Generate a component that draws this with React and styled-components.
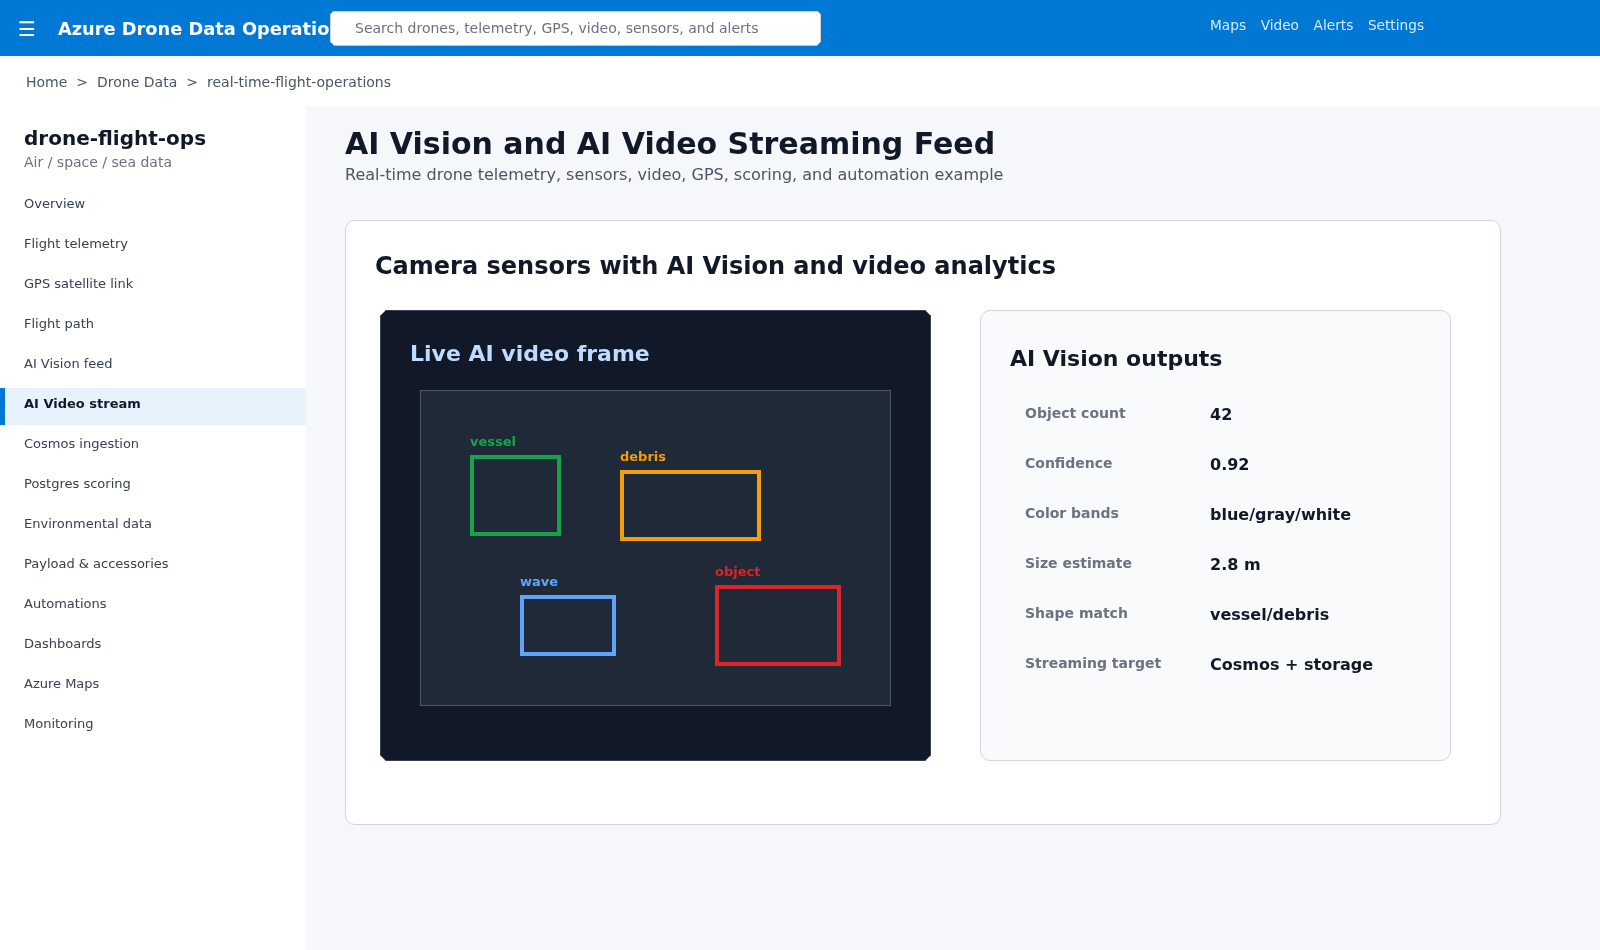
import React from "react";
import styled, { createGlobalStyle } from "styled-components";

const Global = createGlobalStyle`
  html, body { margin: 0; padding: 0; }
  body { font-family: "DejaVu Sans", sans-serif; background: #f5f7fb; }
  * { box-sizing: border-box; }
`;
const chamfer = n => `polygon(${n}px 0, calc(100% - ${n}px) 0, 100% ${n}px, 100% calc(100% - ${n}px), calc(100% - ${n}px) 100%, ${n}px 100%, 0 calc(100% - ${n}px), 0 ${n}px)`;
const Page = styled.div`
  width: 1600px;
  height: 950px;
  overflow: hidden;
  display: flex;
  flex-direction: column;
  background: #fff;
  will-change: transform;
`;
const TopBar = styled.header`
  height: 56px;
  flex: none;
  background: #0078d4;
  display: flex;
  align-items: center;
  padding-left: 18px;
  color: #fff;
`;
const Menu = styled.span`
  width: 18px;
  font-size: 20px;
  line-height: 1;
  margin: 2px 22px 0 0;
`;
const Brand = styled.div`
  width: 272px;
  flex: none;
  white-space: nowrap;
  font-size: 17.8px;
  font-weight: 700;
`;
const Search = styled.div`
  width: 491px;
  height: 35px;
  flex: none;
  background: #fff;
  border: 1px solid #d1d5db;
  clip-path: ${chamfer(4)};
  padding-left: 24px;
  display: flex;
  align-items: center;
  font-size: 14px;
  color: #6b7280;
  position: relative;
`;
const TopNav = styled.nav`
  display: flex;
  gap: 14.6px;
  margin-left: 389px;
  margin-top: -6px;
  font-size: 13.7px;
  color: #dbeafe;
`;
const Crumbs = styled.div`
  height: 50px;
  flex: none;
  display: flex;
  align-items: center;
  gap: 9px;
  padding: 2px 0 0 26px;
  font-size: 14px;
  color: #4b5563;
`;
const Body = styled.div`
  flex: 1;
  display: flex;
  min-height: 0;
`;
const Side = styled.aside`
  width: 306px;
  flex: none;
  background: #fff;
  padding-top: 20px;
`;
const SideTitle = styled.div`
  font-size: 20px;
  font-weight: 700;
  color: #111827;
  padding-left: 24px;
  line-height: 24px;
`;
const SideSub = styled.div`
  font-size: 14px;
  color: #6b7280;
  padding-left: 24px;
  line-height: 17px;
  margin-top: 4px;
  margin-bottom: 17px;
`;
const NavList = styled.div`
  display: flex;
  flex-direction: column;
  gap: 3px;
`;
const NavItem = styled.div`
  height: 37px;
  display: flex;
  align-items: center;
  padding-bottom: 7px;
  padding-left: ${p => (p.$active ? "19px" : "24px")};
  font-size: 13px;
  color: ${p => (p.$active ? "#111827" : "#374151")};
  font-weight: ${p => (p.$active ? 700 : 400)};
  background: ${p => (p.$active ? "#e8f2fd" : "transparent")};
  border-left: ${p => (p.$active ? "5px solid #0078d4" : "none")};
`;
const Main = styled.main`
  flex: 1;
  background: #f5f7fb;
  padding: 19px 0 0 39px;
`;
const H1 = styled.h1`
  margin: 0;
  font-size: 30px;
  line-height: 38px;
  font-weight: 700;
  color: #111827;
`;
const Lead = styled.p`
  margin: 1px 0 0;
  font-size: 16px;
  line-height: 22px;
  color: #4b5563;
`;
const Card = styled.section`
  width: 1156px;
  height: 605px;
  margin-top: 34px;
  background: #fff;
  border: 1px solid #d1d5db;
  border-radius: 10px;
  padding: 30px 29px 0;
`;
const H2 = styled.h2`
  margin: 0;
  font-size: 24px;
  line-height: 30px;
  font-weight: 700;
  color: #111827;
`;
const Columns = styled.div`
  display: flex;
  gap: 49px;
  margin: 29px 0 0 5px;
`;
const Video = styled.div`
  width: 551px;
  height: 451px;
  background: #111827;
  border: 1px solid #374151;
  clip-path: ${chamfer(6)};
  padding: 29px 0 0 29px;
`;
const VideoTitle = styled.h3`
  margin: 0;
  font-size: 22px;
  line-height: 28px;
  font-weight: 700;
  color: #bfdbfe;
`;
const Frame = styled.div`
  position: relative;
  width: 471px;
  height: 316px;
  margin: 22px 0 0 10px;
  background: #1f2937;
  border: 1px solid #4b5563;
`;
const Box = styled.div`
  position: absolute;
  border: 4px solid ${p => p.$c};
`;
const BoxLabel = styled.span`
  position: absolute;
  left: -4px;
  top: -25px;
  font-size: 13px;
  line-height: 16px;
  font-weight: 700;
  color: ${p => p.$c};
`;
const Panel = styled.div`
  width: 471px;
  height: 451px;
  background: #f9fafb;
  border: 1px solid #d1d5db;
  border-radius: 10px;
  padding: 34px 29px 0;
`;
const PanelTitle = styled.h3`
  margin: 0 0 25px;
  font-size: 22px;
  line-height: 28px;
  font-weight: 700;
  color: #111827;
`;
const Rows = styled.div`
  display: grid;
  grid-template-columns: 185px 1fr;
  grid-auto-rows: 50px;
  padding-left: 15px;
`;
const Label = styled.div`
  font-size: 14px;
  font-weight: 700;
  color: #6b7280;
  line-height: 30px;
`;
const Value = styled.div`
  font-size: 16px;
  font-weight: 700;
  color: #111827;
  line-height: 34px;
`;

const nav = ["Overview","Flight telemetry","GPS satellite link","Flight path","AI Vision feed","AI Video stream","Cosmos ingestion","Postgres scoring","Environmental data","Payload & accessories","Automations","Dashboards","Azure Maps","Monitoring"];
const boxes = [
  { n: "vessel", c: "#16a34a", x: 49, y: 64, w: 91, h: 81 },
  { n: "debris", c: "#f59e0b", x: 199, y: 79, w: 141, h: 71 },
  { n: "wave", c: "#60a5fa", x: 99, y: 204, w: 96, h: 61 },
  { n: "object", c: "#dc2626", x: 294, y: 194, w: 126, h: 81 },
];
const rows = [["Object count","42"],["Confidence","0.92"],["Color bands","blue/gray/white"],["Size estimate","2.8 m"],["Shape match","vessel/debris"],["Streaming target","Cosmos + storage"]];

export default function App() {
  return (
    <Page>
      <Global />
      <TopBar>
        <Menu>☰</Menu>
        <Brand>Azure Drone Data Operations</Brand>
        <Search>Search drones, telemetry, GPS, video, sensors, and alerts</Search>
        <TopNav>
          <span>Maps</span><span>Video</span><span>Alerts</span><span>Settings</span>
        </TopNav>
      </TopBar>
      <Crumbs>
        <span>Home</span><span>&gt;</span><span>Drone Data</span><span>&gt;</span><span>real-time-flight-operations</span>
      </Crumbs>
      <Body>
        <Side>
          <SideTitle>drone-flight-ops</SideTitle>
          <SideSub>Air / space / sea data</SideSub>
          <NavList>
            {nav.map(n => <NavItem key={n} $active={n === "AI Video stream"}>{n}</NavItem>)}
          </NavList>
        </Side>
        <Main>
          <H1>AI Vision and AI Video Streaming Feed</H1>
          <Lead>Real-time drone telemetry, sensors, video, GPS, scoring, and automation example</Lead>
          <Card>
            <H2>Camera sensors with AI Vision and video analytics</H2>
            <Columns>
              <Video>
                <VideoTitle>Live AI video frame</VideoTitle>
                <Frame>
                  {boxes.map(b => (
                    <Box key={b.n} $c={b.c} style={{ left: b.x, top: b.y, width: b.w, height: b.h }}>
                      <BoxLabel $c={b.c}>{b.n}</BoxLabel>
                    </Box>
                  ))}
                </Frame>
              </Video>
              <Panel>
                <PanelTitle>AI Vision outputs</PanelTitle>
                <Rows>
                  {rows.map(([l, v]) => (
                    <React.Fragment key={l}>
                      <Label>{l}</Label>
                      <Value>{v}</Value>
                    </React.Fragment>
                  ))}
                </Rows>
              </Panel>
            </Columns>
          </Card>
        </Main>
      </Body>
    </Page>
  );
}
